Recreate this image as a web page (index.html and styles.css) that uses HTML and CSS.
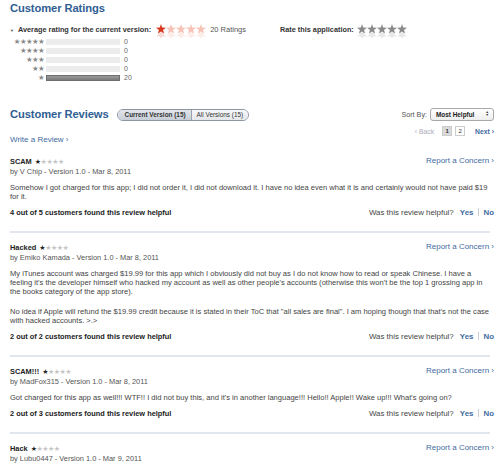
FILE: index.html
```html
<!DOCTYPE html>
<html>
<head>
<meta charset="utf-8">
<link rel="stylesheet" href="styles.css">
</head>
<body>
<div class="page">
  <section class="ratings">
    <h2 class="title">Customer Ratings</h2>
    <div class="rating-top">
      <div class="avg">
        <span class="tri">▼</span>
        <span class="avg-label">Average rating for the current version:</span>
        <span class="bigstars red">
          <svg width="10" height="14" viewBox="0 0 10 14"><path class="s on" d="M5 0L6.2 3.6L10 3.7L7 6L8.1 9.6L5 7.5L1.9 9.6L3 6L0 3.7L3.8 3.6Z"/><path class="r on" d="M5 14L6.2 10.4L10 10.3L7 8L8.1 4.4L5 6.5L1.9 4.4L3 8L0 10.3L3.8 10.4Z" transform="translate(0 2)"/></svg><svg width="10" height="14" viewBox="0 0 10 14"><path class="s off" d="M5 0L6.2 3.6L10 3.7L7 6L8.1 9.6L5 7.5L1.9 9.6L3 6L0 3.7L3.8 3.6Z"/><path class="r off" d="M5 14L6.2 10.4L10 10.3L7 8L8.1 4.4L5 6.5L1.9 4.4L3 8L0 10.3L3.8 10.4Z" transform="translate(0 2)"/></svg><svg width="10" height="14" viewBox="0 0 10 14"><path class="s off" d="M5 0L6.2 3.6L10 3.7L7 6L8.1 9.6L5 7.5L1.9 9.6L3 6L0 3.7L3.8 3.6Z"/><path class="r off" d="M5 14L6.2 10.4L10 10.3L7 8L8.1 4.4L5 6.5L1.9 4.4L3 8L0 10.3L3.8 10.4Z" transform="translate(0 2)"/></svg><svg width="10" height="14" viewBox="0 0 10 14"><path class="s off" d="M5 0L6.2 3.6L10 3.7L7 6L8.1 9.6L5 7.5L1.9 9.6L3 6L0 3.7L3.8 3.6Z"/><path class="r off" d="M5 14L6.2 10.4L10 10.3L7 8L8.1 4.4L5 6.5L1.9 4.4L3 8L0 10.3L3.8 10.4Z" transform="translate(0 2)"/></svg><svg width="10" height="14" viewBox="0 0 10 14"><path class="s off" d="M5 0L6.2 3.6L10 3.7L7 6L8.1 9.6L5 7.5L1.9 9.6L3 6L0 3.7L3.8 3.6Z"/><path class="r off" d="M5 14L6.2 10.4L10 10.3L7 8L8.1 4.4L5 6.5L1.9 4.4L3 8L0 10.3L3.8 10.4Z" transform="translate(0 2)"/></svg>
        </span>
        <span class="count-label">20 Ratings</span>
      </div>
      <div class="rate">
        <span class="avg-label">Rate this application:</span>
        <span class="bigstars gray">
          <svg width="10" height="14" viewBox="0 0 10 14"><path class="s" d="M5 0L6.2 3.6L10 3.7L7 6L8.1 9.6L5 7.5L1.9 9.6L3 6L0 3.7L3.8 3.6Z"/><path class="r" d="M5 14L6.2 10.4L10 10.3L7 8L8.1 4.4L5 6.5L1.9 4.4L3 8L0 10.3L3.8 10.4Z" transform="translate(0 2)"/></svg><svg width="10" height="14" viewBox="0 0 10 14"><path class="s" d="M5 0L6.2 3.6L10 3.7L7 6L8.1 9.6L5 7.5L1.9 9.6L3 6L0 3.7L3.8 3.6Z"/><path class="r" d="M5 14L6.2 10.4L10 10.3L7 8L8.1 4.4L5 6.5L1.9 4.4L3 8L0 10.3L3.8 10.4Z" transform="translate(0 2)"/></svg><svg width="10" height="14" viewBox="0 0 10 14"><path class="s" d="M5 0L6.2 3.6L10 3.7L7 6L8.1 9.6L5 7.5L1.9 9.6L3 6L0 3.7L3.8 3.6Z"/><path class="r" d="M5 14L6.2 10.4L10 10.3L7 8L8.1 4.4L5 6.5L1.9 4.4L3 8L0 10.3L3.8 10.4Z" transform="translate(0 2)"/></svg><svg width="10" height="14" viewBox="0 0 10 14"><path class="s" d="M5 0L6.2 3.6L10 3.7L7 6L8.1 9.6L5 7.5L1.9 9.6L3 6L0 3.7L3.8 3.6Z"/><path class="r" d="M5 14L6.2 10.4L10 10.3L7 8L8.1 4.4L5 6.5L1.9 4.4L3 8L0 10.3L3.8 10.4Z" transform="translate(0 2)"/></svg><svg width="10" height="14" viewBox="0 0 10 14"><path class="s" d="M5 0L6.2 3.6L10 3.7L7 6L8.1 9.6L5 7.5L1.9 9.6L3 6L0 3.7L3.8 3.6Z"/><path class="r" d="M5 14L6.2 10.4L10 10.3L7 8L8.1 4.4L5 6.5L1.9 4.4L3 8L0 10.3L3.8 10.4Z" transform="translate(0 2)"/></svg>
        </span>
      </div>
    </div>
    <div class="histo">
      <div class="hrow"><span class="hstars">★★★★★</span><span class="bar"></span><span class="hnum">0</span></div>
      <div class="hrow"><span class="hstars">★★★★</span><span class="bar"></span><span class="hnum">0</span></div>
      <div class="hrow"><span class="hstars">★★★</span><span class="bar"></span><span class="hnum">0</span></div>
      <div class="hrow"><span class="hstars">★★</span><span class="bar"></span><span class="hnum">0</span></div>
      <div class="hrow"><span class="hstars">★</span><span class="bar"><span class="fill" style="width:100%"></span></span><span class="hnum">20</span></div>
    </div>
  </section>

  <section class="reviews">
    <div class="rev-head">
      <h2 class="title">Customer Reviews</h2>
      <div class="seg">
        <span class="seg-item active">Current Version (15)</span><span class="seg-item">All Versions (15)</span>
      </div>
      <div class="sort">
        <span class="sort-label">Sort By:</span>
        <span class="select">Most Helpful<span class="arrows">▲<br>▼</span></span>
      </div>
    </div>
    <div class="pager">
      <span class="back">‹ Back</span>
      <span class="pg cur">1</span>
      <span class="pg">2</span>
      <a class="next">Next ›</a>
    </div>
    <a class="write">Write a Review ›</a>

    <div class="review">
      <div class="rhead">
        <div>
          <div class="rtitle">SCAM <span class="rstars"><b>★</b>★★★★</span></div>
          <div class="by">by V Chip - Version 1.0 - Mar 8, 2011</div>
        </div>
        <a class="report">Report a Concern ›</a>
      </div>
      <p class="body">Somehow I got charged for this app; I did not order it, I did not download it. I have no idea even what it is and certainly would not have paid $19 for it.</p>
      <div class="helpful">
        <span class="found">4 out of 5 customers found this review helpful</span>
        <span class="vote">Was this review helpful? <a class="yes">Yes</a><span class="pipe"></span><a class="no">No</a></span>
      </div>
    </div>

    <div class="review">
      <div class="rhead">
        <div>
          <div class="rtitle">Hacked <span class="rstars"><b>★</b>★★★★</span></div>
          <div class="by">by Emiko Kamada - Version 1.0 - Mar 8, 2011</div>
        </div>
        <a class="report">Report a Concern ›</a>
      </div>
      <p class="body">My iTunes account was charged $19.99 for this app which I obviously did not buy as I do not know how to read or speak Chinese. I have a feeling it's the developer himself who hacked my account as well as other people's accounts (otherwise this won't be the top 1 grossing app in the books category of the app store).</p>
      <p class="body">No idea if Apple will refund the $19.99 credit because it is stated in their ToC that "all sales are final". I am hoping though that that's not the case with hacked accounts. &gt;.&gt;</p>
      <div class="helpful">
        <span class="found">2 out of 2 customers found this review helpful</span>
        <span class="vote">Was this review helpful? <a class="yes">Yes</a><span class="pipe"></span><a class="no">No</a></span>
      </div>
    </div>

    <div class="review">
      <div class="rhead">
        <div>
          <div class="rtitle">SCAM!!! <span class="rstars"><b>★</b>★★★★</span></div>
          <div class="by">by MadFox315 - Version 1.0 - Mar 8, 2011</div>
        </div>
        <a class="report">Report a Concern ›</a>
      </div>
      <p class="body">Got charged for this app as well!!! WTF!! I did not buy this, and it's in another language!!! Hello!! Apple!! Wake up!!! What's going on?</p>
      <div class="helpful">
        <span class="found">2 out of 3 customers found this review helpful</span>
        <span class="vote">Was this review helpful? <a class="yes">Yes</a><span class="pipe"></span><a class="no">No</a></span>
      </div>
    </div>

    <div class="review">
      <div class="rhead">
        <div>
          <div class="rtitle">Hack <span class="rstars"><b>★</b>★★★★</span></div>
          <div class="by">by Lubu0447 - Version 1.0 - Mar 9, 2011</div>
        </div>
        <a class="report">Report a Concern ›</a>
      </div>
    </div>
  </section>
</div>
</body>
</html>
```

FILE: styles.css
```css
* { box-sizing: border-box; }
html, body { margin: 0; padding: 0; background: #fff; }
body {
  font-family: "Liberation Sans", Arial, sans-serif;
  color: #444;
  font-size: 7.4px;
  line-height: 9px;
  width: 500px;
  height: 465px;
  overflow: hidden;
}
a { color: #3f6b9f; text-decoration: none; }
.page { padding: 2px 6px 0 10px; }

.title {
  margin: 0;
  font-size: 11.2px;
  line-height: 13px;
  font-weight: bold;
  color: #2f5e93;
  letter-spacing: -0.1px;
}

.rating-top {
  display: flex;
  align-items: flex-start;
  margin-top: 10px;
  height: 14px;
}
.avg { display: flex; align-items: flex-start; width: 270px; }
.tri { font-size: 4px; color: #555; width: 8px; line-height: 9px; padding-top: 1px; }
.avg-label { font-weight: bold; color: #333; font-size: 7.3px; line-height: 9px; }
.bigstars { display: flex; margin-left: 5px; margin-top: -1px; gap: 0; }
.bigstars svg { display: block; }
.bigstars .r { opacity: 0.18; }
.red .s.on { fill: #d7381b; }
.red .r.on { fill: #d7381b; }
.red .s.off, .red .r.off { fill: #f6c3b6; }
.red .r.off { opacity: 0.3; }
.gray .s { fill: #8a8a8a; }
.gray .r { fill: #8a8a8a; opacity: 0.2; }
.count-label { margin-left: 4px; color: #555; font-size: 7.5px; }
.rate { display: flex; align-items: flex-start; margin-left: 0; }
.rate .bigstars { margin-left: 3px; }

.histo { margin-top: -2px; }
.hrow { display: flex; align-items: center; height: 9px; }
.hstars {
  width: 34px;
  text-align: right;
  color: #8a8a8a;
  font-family: "DejaVu Sans", sans-serif;
  font-size: 7.4px;
  letter-spacing: -0.6px;
  line-height: 9px;
}
.bar {
  width: 74px;
  height: 6px;
  margin-left: 2px;
  background: #ececec;
}
.fill {
  display: block;
  height: 100%;
  background: linear-gradient(#9a9a9a, #7a7a7a);
  border: 1px solid #6e6e6e;
}
.hnum { margin-left: 4px; color: #666; font-size: 7px; }

.reviews { margin-top: 25px; }
.rev-head { display: flex; align-items: center; height: 14px; }
.seg {
  display: flex;
  margin-left: 8px;
  border: 1px solid #8d96a3;
  border-radius: 7px;
  overflow: hidden;
  height: 12px;
  margin-top: 1px;
}
.seg-item {
  font-size: 6.4px;
  line-height: 10px;
  padding: 0 5px;
  color: #333;
  background: linear-gradient(#f7f8fa, #e3e6ea);
}
.seg-item.active {
  background: linear-gradient(#e2e6eb, #c7ced7);
  border-right: 1px solid #9aa2ad;
  padding-left: 7px;
  font-weight: bold;
}
.sort { margin-left: auto; display: flex; align-items: center; }
.sort-label { color: #555; font-size: 7.2px; }
.select {
  margin-left: 3px;
  width: 64px;
  height: 13px;
  border: 1px solid #a8a8a8;
  border-radius: 3px;
  background: linear-gradient(#fff, #eee);
  font-weight: bold;
  font-size: 6.4px;
  line-height: 11px;
  padding-left: 5px;
  color: #222;
  display: flex;
  justify-content: space-between;
}
.arrows {
  font-size: 3.5px;
  line-height: 3.5px;
  padding: 2px 4px 0 0;
  color: #333;
}

.pager {
  display: flex;
  justify-content: flex-end;
  align-items: center;
  gap: 3px;
  margin-top: 5px;
  height: 10px;
  font-size: 6.8px;
}
.back { color: #aab; margin-right: 5px; }
.pg {
  width: 10px;
  height: 10px;
  border: 1px solid #ccc;
  text-align: center;
  line-height: 8px;
  font-size: 6px;
  color: #333;
  background: #fff;
}
.pg.cur { background: #dadada; font-weight: bold; }
.next { font-weight: bold; margin-left: 7px; color: #3f6b9f; }

.write { display: block; margin-top: -1px; margin-bottom: 3px; font-size: 8px; }

.review {
  padding-top: 10px;
  padding-bottom: 14px;
  border-bottom: 2px solid #e1e6ee;
  margin-right: 4px;
}
.review:last-child { border-bottom: 0; }
.rhead { display: flex; justify-content: space-between; align-items: flex-start; }
.rtitle { font-weight: bold; color: #222; }
.rstars { font-family: "DejaVu Sans", sans-serif; font-weight: normal; color: #c4c4c4; font-size: 7px; letter-spacing: -0.5px; margin-left: 1px; }
.rstars b { color: #222; font-weight: normal; }
.by { color: #555; }
.report { margin-right: -4px; margin-top: -1px; font-size: 8px; }
.body { margin: 7px -4px 0 0; color: #444; font-size: 7.55px; }
.body + .body { margin-top: 11px; }
.helpful { display: flex; justify-content: space-between; margin-top: 7px; }
.found { font-weight: bold; color: #222; }
.vote { color: #444; margin-right: -4px; font-size: 7.9px; }
.yes, .no { font-weight: bold; }
.yes { margin-left: 4px; }
.pipe { display: inline-block; width: 1px; height: 8px; background: #ccc; margin: 0 4px 0 5px; vertical-align: -1px; }
```
